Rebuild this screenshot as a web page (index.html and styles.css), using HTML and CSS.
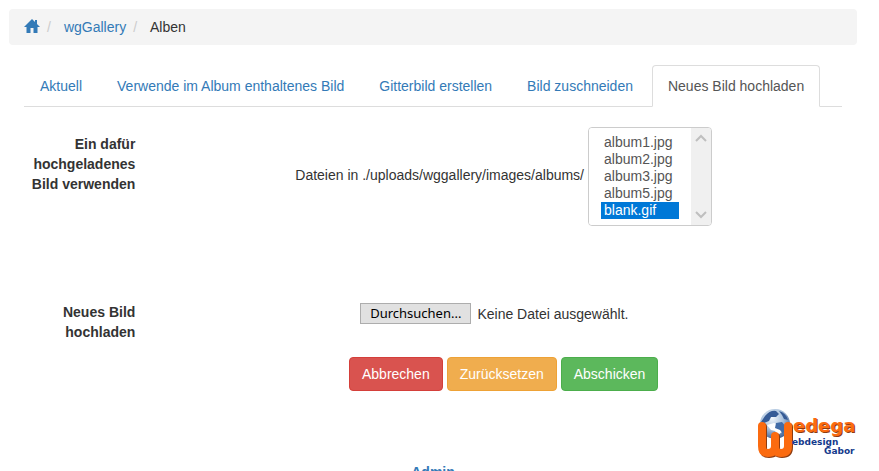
FILE: index.html
```html
<!DOCTYPE html>
<html lang="de">
<head>
<meta charset="utf-8">
<title>wgGallery</title>
<link rel="stylesheet" href="styles.css">
</head>
<body>
<nav class="breadcrumb" aria-label="Pfad">
  <a href="#" aria-label="Startseite"><svg class="home" viewBox="0 0 16 15" width="16" height="15"><path d="M8 0 L16 8 H13.500 V14 H9.500 V9 H6.500 V14 H2.500 V8 H0 Z M11 1 H13 V5 L11 3 Z" fill="currentColor"/></svg></a>
  <span class="sep">/</span>
  <a href="#">wgGallery</a>
  <span class="sep">/</span>
  <span>Alben</span>
</nav>
<main class="content">
  <nav class="tabs">
    <a class="tab" href="#">Aktuell</a>
    <a class="tab" href="#">Verwende im Album enthaltenes Bild</a>
    <a class="tab" href="#">Gitterbild erstellen</a>
    <a class="tab" href="#">Bild zuschneiden</a>
    <a class="tab active" href="#">Neues Bild hochladen</a>
  </nav>
  <form>
    <div class="row files-row">
      <label class="caption" for="image">Ein dafür hochgeladenes Bild verwenden</label>
      <div class="field">
        <span class="path">Dateien in ./uploads/wggallery/images/albums/</span>
        <div class="listbox">
          <select id="image" size="5">
            <option>album1.jpg</option>
            <option>album2.jpg</option>
            <option>album3.jpg</option>
            <option>album5.jpg</option>
            <option selected>blank.gif</option>
          </select>
          <div class="scrollbar" aria-hidden="true">
            <svg viewBox="0 0 12 8" width="12" height="8"><path d="M1 7 L6 2 L11 7"/></svg>
            <svg viewBox="0 0 12 8" width="12" height="8"><path d="M1 1 L6 6 L11 1"/></svg>
          </div>
        </div>
      </div>
    </div>
    <div class="row upload-row">
      <label class="caption" for="upload">Neues Bild hochladen</label>
      <div class="field">
        <div class="file">
          <input id="upload" type="file">
          <label class="browse" for="upload">Durchsuchen...</label>
          <span>Keine Datei ausgewählt.</span>
        </div>
      </div>
    </div>
    <div class="row">
      <div class="field actions">
        <button class="btn danger" type="button">Abbrechen</button>
        <button class="btn warning" type="reset">Zurücksetzen</button>
        <button class="btn success" type="submit">Abschicken</button>
      </div>
    </div>
  </form>
</main>
<footer>
  <a class="logo" href="#" aria-label="Wedega Webdesign Gabor">
    <svg viewBox="0 0 100 51" width="100" height="51">
      <defs>
        <radialGradient id="sea" cx=".4" cy=".3" r=".75"><stop offset="0" stop-color="#f4f8fc"/><stop offset=".5" stop-color="#a9c1dc"/><stop offset="1" stop-color="#36588f"/></radialGradient>
      </defs>
      <circle cx="18" cy="16" r="15" fill="url(#sea)"/>
      <path d="M8 8 Q13 2 19 3 L22 6 L19 9 L14 9 L12 13 L7 15 L4 14 Z M22 3 Q29 5 31 12 L27 11 L25 7 Z" fill="#365b96"/>
      <path d="M10 17 L17 15 L22 17 L26 18 L25 24 L21 27 L18 23 L14 22 Z" fill="#fff"/>
      <path d="M19 15 L25 14 L29 19 L26 26 L23 22 L18 20 Z" fill="#426ca7"/>
      <g fill="none" stroke-linecap="round" stroke-linejoin="round">
        <path d="M6 19 V39 Q6 46 12 46 Q19 46 19 39 V29 V39 Q19 46 25 46 Q32 46 32 39 V19" stroke="#8c3c12" stroke-width="8"/>
        <path d="M5 18 V38 Q5 45 11 45 Q18 45 18 38 V28 V38 Q18 45 24 45 Q31 45 31 38 V18" stroke="#fb6b10" stroke-width="8"/>
      </g>
      <g class="brand">
        <text x="37" y="25" fill="#8c3c12">edega</text>
        <text x="36" y="24" fill="#fb6b10">edega</text>
      </g>
      <g class="brand-sub">
        <text x="35" y="37">ebdesign</text>
        <text x="67" y="46">Gabor</text>
      </g>
    </svg>
  </a>
  <a class="admin" href="#">Admin</a>
</footer>
</body>
</html>
```
FILE: styles.css
```css
* { box-sizing: border-box; }
body {
  margin: 9px 22px 0 9px;
  font: 14px/20px "Liberation Sans", Arial, sans-serif;
  color: #333;
  background: #fff;
}
html { overflow: hidden; }
a { color: #337ab7; text-decoration: none; }
.breadcrumb {
  display: flex;
  padding: 8px 15px;
  background: #f4f4f4;
  border-radius: 4px;
}
.home { display: block; margin-top: 2px; }
.sep { color: #ccc; padding: 0 13px 0 7px; }
.content { padding: 20px 0 0; }
.tabs {
  display: flex;
  gap: 3px;
  margin: 0 15px;
  border-bottom: 1px solid #ddd;
}
.tab {
  padding: 10px 15px;
  margin-bottom: -1px;
  border: 1px solid transparent;
  border-radius: 4px 4px 0 0;
}
.tab.active {
  color: #555;
  background: #fff;
  border-color: #ddd #ddd #fff;
}
form { padding-top: 20px; }
.row {
  display: grid;
  grid-template-columns: 1fr 5fr;
}
.caption {
  padding: 7px 15px 0;
  font-weight: bold;
  text-align: right;
}
.field {
  grid-column: 2;
  display: flex;
  justify-content: center;
  align-items: center;
  gap: 4px;
  padding: 0 15px;
}
.path { padding-bottom: 4px; }
.files-row { margin-bottom: 69px; }
.upload-row { margin-bottom: 15px; }
.upload-row .field { align-items: flex-start; padding-top: 8px; }
.listbox {
  display: flex;
  border: 1px solid #ccc;
  border-radius: 4px;
  overflow: hidden;
}
.listbox select {
  width: 102px;
  height: 97px;
  padding: 6px 12px;
  border: 0;
  outline: 0;
  overflow: hidden;
  font: inherit;
  line-height: 17px;
  color: #555;
  background: #fff;
}
.listbox option {
  min-height: 17px;
  height: 17px;
  padding: 0 3px;
  line-height: 17px;
}
.listbox option:checked {
  color: #fff;
  background: #0078d7 linear-gradient(#0078d7, #0078d7);
}
.scrollbar {
  display: flex;
  flex-direction: column;
  justify-content: space-between;
  align-items: center;
  width: 20px;
  padding: 6px 0;
  background: #f0f0f0;
}
.scrollbar path { fill: none; stroke: #bfbfbf; stroke-width: 2; }
.file {
  position: relative;
  display: flex;
  gap: 6px;
  align-items: center;
  width: 287px;
}
.file input {
  position: absolute;
  width: 1px;
  height: 1px;
  opacity: 0;
}
.browse {
  padding: 0 9px;
  border: 1px solid #adadad;
  background: #e1e1e1;
  color: #000;
  font: 13px/19px "Noto Sans", "Open Sans", sans-serif;
}
.btn {
  padding: 6px 12px;
  border: 1px solid;
  border-radius: 4px;
  font: inherit;
  color: #fff;
}
.danger { background: #d9534f; border-color: #d43f3a; }
.warning { background: #f0ad4e; border-color: #eea236; }
.success { background: #5cb85c; border-color: #4cae4c; }
footer {
  display: flex;
  flex-direction: column;
  padding-top: 17px;
}
.logo { align-self: flex-end; }
.logo svg { display: block; }
.brand { font: bold 18px "DejaVu Sans", sans-serif; }
.brand-sub { font: bold 9px "DejaVu Sans", sans-serif; fill: #153a8c; }
.admin { align-self: center; margin-top: 3px; font-weight: bold; }
```
